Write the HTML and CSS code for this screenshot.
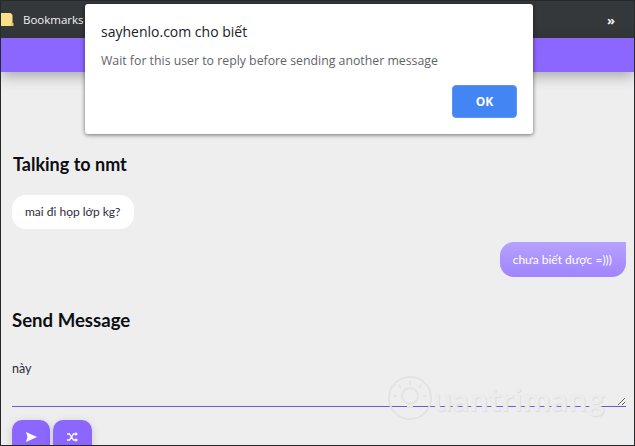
FILE: index.html
```html
<!DOCTYPE html>
<html lang="vi">
<head>
    <meta charset="UTF-8">
    <title>sayhenlo</title>
    <link rel="stylesheet" href="styles.css">
</head>
<body>
    <div class="window">
        <div class="bookmarks-bar">
            <div class="bookmarks-left">
                <svg class="folder-icon" width="13" height="14" viewBox="0 0 13 14">
                    <path d="M0 0h9.500l2 2v10h-1.500v1H0z" fill="#fbe08c"/>
                    <path d="M10 10h2.500v3H10z" fill="#e8c563"/>
                </svg>
                <span class="bookmarks-label">Bookmarks</span>
            </div>
            <span class="more-btn">»</span>
        </div>
        <div class="top-bar"></div>

        <div class="main-content">
            <h2 class="talking-title">Talking to nmt</h2>
            <div class="messages">
                <div class="bubble bubble-them">mai đi họp lớp kg?</div>
                <div class="bubble bubble-me">chưa biết được =)))</div>
            </div>
            <h2 class="send-title">Send Message</h2>
            <textarea class="message-input">này</textarea>
            <div class="actions">
                <button class="action-btn btn-send">
                    <svg width="11" height="10" viewBox="0 0 11 10"><path d="M0 0l11 5-11 5 1.500-5z" fill="#fff"/></svg>
                </button>
                <button class="action-btn btn-random">
                    <svg width="11" height="10" viewBox="0 0 11 10">
                        <path d="M0 2h2.500l4 6H9M0 8h2.500l4-6H9" fill="none" stroke="#fff" stroke-width="1.300"/>
                        <path d="M8.500 0l2.500 2-2.500 2zM8.500 6l2.500 2-2.500 2z" fill="#fff"/>
                    </svg>
                </button>
            </div>
        </div>

        <div class="watermark">
            <svg width="46" height="46" viewBox="0 0 46 46" fill="none" stroke="#e3e3e3" stroke-width="2">
                <circle cx="23" cy="23" r="21"/>
                <circle cx="23" cy="21" r="8"/>
                <path d="M23 6v4M12 10l2 3M34 10l-2 3M7 21h3M36 21h3M20 32h6"/>
            </svg>
            <span class="watermark-text">uantrimang</span>
        </div>

        <div class="alert-box">
            <div class="alert-title">sayhenlo.com cho biết</div>
            <div class="alert-text">Wait for this user to reply before sending another message</div>
            <div class="alert-footer">
                <button class="alert-ok">OK</button>
            </div>
        </div>
    </div>
</body>
</html>
```

FILE: styles.css
```css
* {
    box-sizing: border-box;
}
html, body {
    margin: 0;
    height: 100%;
}
body {
    overflow: hidden;
    background: #eeeeee;
    font-family: 'Lato', sans-serif;
}

.window {
    position: relative;
    width: 635px;
    height: 446px;
    overflow: hidden;
    display: flex;
    flex-direction: column;
    border: 1px solid #26282a;
}

.bookmarks-bar {
    height: 37px;
    flex-shrink: 0;
    background: #35383b;
    color: #f1f1f1;
    display: flex;
    align-items: center;
    justify-content: space-between;
    padding: 0 19px 0 0;
    font-family: 'Open Sans', sans-serif;
    font-size: 11.500px;
}
.bookmarks-left {
    display: flex;
    align-items: center;
    gap: 9px;
}
.folder-icon {
    display: block;
}
.more-btn {
    font-size: 13px;
    font-weight: 700;
}

.top-bar {
    height: 34px;
    flex-shrink: 0;
    background: #8b66ff;
    box-shadow: 0 4px 14px rgba(0, 0, 0, 0.3);
}

.main-content {
    flex: 1;
    display: flex;
    flex-direction: column;
    padding: 0 8px 0 11px;
}

.talking-title {
    margin: 81px 0 0 1px;
    font-size: 18px;
    line-height: 22px;
    font-weight: 700;
    color: #0d0d14;
}
.send-title {
    margin: 32px 0 0 0;
    font-size: 18.600px;
    line-height: 22px;
    font-weight: 700;
    color: #0d0d14;
}

.messages {
    margin-top: 20px;
    display: flex;
    flex-direction: column;
    gap: 13px;
}
.bubble {
    width: fit-content;
    padding: 0 13px;
    height: 34px;
    line-height: 34px;
    font-size: 12px;
    border-radius: 14px;
}
.bubble-them {
    background: #ffffff;
    color: #2c2c3a;
    padding-right: 14px;
}
.bubble-me {
    align-self: flex-end;
    height: 35px;
    line-height: 35px;
    color: #ffffff;
    background: linear-gradient(#b6a2ff, #a084ff);
    border-top-right-radius: 0;
    padding: 0 14px 0 13px;
}

.message-input {
    display: block;
    width: 100%;
    height: 58px;
    margin-top: 18px;
    padding: 12px 0 0 0;
    background: transparent;
    border: 0;
    border-bottom: 1px solid #6f58dd;
    outline: none;
    font-family: 'Lato', sans-serif;
    font-size: 12.500px;
    color: #2c2c3a;
}

.actions {
    display: flex;
    gap: 3px;
    margin-top: 13px;
}
.action-btn {
    width: 38px;
    height: 36px;
    padding: 0 0 3px 0;
    border: 0;
    border-radius: 10px;
    background: #8b66ff;
    box-shadow: 0 2px 8px rgba(0, 0, 0, 0.15);
    display: flex;
    align-items: center;
    justify-content: center;
}
.btn-random {
    width: 39px;
}

.watermark {
    position: absolute;
    left: 386px;
    top: 374px;
    display: flex;
    align-items: center;
    pointer-events: none;
}
.watermark-text {
    font-size: 33px;
    font-weight: 700;
    letter-spacing: 0.5px;
    color: #ececec;
    text-shadow: 1px 1px 1px #dcdcdc;
}

.alert-box {
    position: absolute;
    left: 84px;
    top: 3px;
    width: 448px;
    height: 130px;
    background: #ffffff;
    border-radius: 3px;
    box-shadow: 0 1px 4px rgba(0, 0, 0, 0.55);
    padding: 18px 16px 0 16px;
    font-family: 'Open Sans', sans-serif;
}
.alert-title {
    font-size: 14px;
    line-height: 20px;
    color: #202124;
}
.alert-text {
    margin-top: 10px;
    font-size: 12.300px;
    line-height: 18px;
    color: #5f6368;
}
.alert-footer {
    display: flex;
    justify-content: flex-end;
    margin-top: 15px;
}
.alert-ok {
    width: 65px;
    height: 33px;
    border: 1px solid #5c94f7;
    border-radius: 4px;
    background: #4485f4;
    color: #ffffff;
    font-family: 'Open Sans', sans-serif;
    font-size: 12px;
    font-weight: 700;
}
```
